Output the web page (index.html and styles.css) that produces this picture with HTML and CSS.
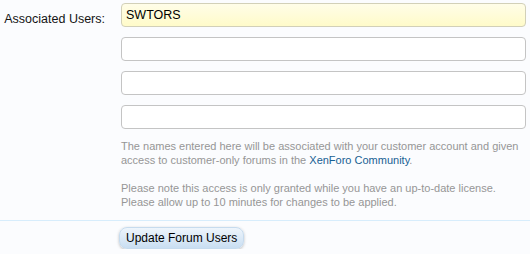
FILE: index.html
```html
<!DOCTYPE html>
<html>
<head>
<meta charset="utf-8">
<link rel="stylesheet" href="styles.css">
</head>
<body>
<form class="form">
  <div class="ctrl-unit">
    <div class="label">Associated Users:</div>
    <div class="ctrl">
      <input class="text-input focused" type="text" value="SWTORS">
      <input class="text-input" type="text">
      <input class="text-input" type="text">
      <input class="text-input" type="text">
      <div class="explain">
        <p>The names entered here will be associated with your customer account and given access to customer-only forums in the <a href="#">XenForo Community</a>.</p>
        <p>Please note this access is only granted while you have an up-to-date license. Please allow up to 10 minutes for changes to be applied.</p>
      </div>
    </div>
  </div>
  <div class="submit-unit">
    <div></div>
    <div><button type="button" class="button">Update Forum Users</button></div>
  </div>
</form>
</body>
</html>
```

FILE: styles.css
```css
html, body {
  margin: 0;
  padding: 0;
  background: #fbfcfe;
}
body {
  font-family: "Liberation Sans", Arial, sans-serif;
  font-size: 13px;
  color: #141414;
}
.form {
  display: flex;
  flex-direction: column;
}
.ctrl-unit {
  display: grid;
  grid-template-columns: 105px 1fr;
  column-gap: 16px;
  padding: 3px 4px 0 0;
}
.label {
  text-align: right;
  padding-top: 9px;
  font-size: 12.5px;
  color: #141414;
}
.ctrl {
  display: flex;
  flex-direction: column;
  gap: 10px;
}
.text-input {
  box-sizing: border-box;
  height: 24px;
  width: 100%;
  margin: 0;
  border: 1px solid #c4c4c4;
  border-radius: 4px;
  background: #ffffff;
  font-family: inherit;
  font-size: 12.5px;
  padding: 2px 4px;
  color: #000;
  outline: none;
}
.text-input.focused {
  background: linear-gradient(#fffde8, #fffbc9);
  border-color: #d2d0b8;
}
.explain {
  font-size: 11px;
  color: #969696;
  line-height: 14px;
  margin-top: 0;
}
.explain p {
  margin: 0 0 14px 0;
}
.explain p:last-child {
  margin-bottom: 0;
}
.explain a {
  color: #176093;
  text-decoration: none;
}
.submit-unit {
  display: grid;
  grid-template-columns: 105px 1fr;
  column-gap: 14px;
  margin-top: 11px;
  border-top: 1px solid #d7edfc;
  padding-top: 6px;
}
.button {
  font-family: inherit;
  font-size: 12px;
  color: #000;
  height: 22px;
  padding: 0 6px;
  border: 1px solid #c6dbee;
  border-radius: 8px;
  background: linear-gradient(#eef5fc, #c9def2);
  box-shadow: 0 1px 3px rgba(0,0,0,0.25);
  cursor: pointer;
}
```
